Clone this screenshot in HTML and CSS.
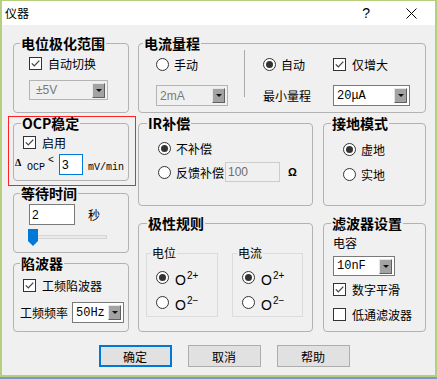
FILE: index.html
```html
<!DOCTYPE html>
<html lang="zh-CN">

<head>
    <meta charset="UTF-8">
    <meta name="viewport" content="width=device-width, initial-scale=1.0">
    <title>仪器</title>
    <link rel="stylesheet" href="styles.css">
</head>

<body>

    <div class="window">

        <div class="titlebar">
            <span class="title">仪器</span>
            <span class="help">?</span>
            <svg class="close" width="11" height="11" viewBox="0 0 11 11"><path d="M0.5 0.5 L10.5 10.5 M10.5 0.5 L0.5 10.5" stroke="#000" stroke-width="1"/></svg>
        </div>

        <div class="dialog">
            <div class="columns">

                <div class="col-left">
                    <fieldset class="group g-range">
                        <legend>电位极化范围</legend>
                        <div class="gbody">
                            <label class="opt"><span class="check"><svg width="11" height="11" viewBox="0 0 11 11"><path d="M1.8 5.4 L4.3 7.9 L9.3 2.6" stroke="#444" stroke-width="1.3" fill="none"/></svg></span><span>自动切换</span></label>
                            <div class="combo off"><span class="val">±5V</span><span class="drop"></span></div>
                        </div>
                    </fieldset>

                    <div class="mark">
                        <fieldset class="group g-ocp">
                            <legend>OCP稳定</legend>
                            <div class="gbody">
                                <label class="opt"><span class="check"><svg width="11" height="11" viewBox="0 0 11 11"><path d="M1.8 5.4 L4.3 7.9 L9.3 2.6" stroke="#444" stroke-width="1.3" fill="none"/></svg></span><span>启用</span></label>
                                <div class="ocp-row">
                                    <span class="delta">Δ</span>
                                    <span class="ocp">OCP</span>
                                    <span class="lt">&lt;</span>
                                    <span class="field focus">3</span>
                                    <span class="unit">mV/min</span>
                                </div>
                            </div>
                        </fieldset>
                    </div>

                    <fieldset class="group g-wait">
                        <legend>等待时间</legend>
                        <div class="gbody">
                            <div class="wait-row">
                                <span class="field">2</span>
                                <span class="sec">秒</span>
                            </div>
                            <div class="slider">
                                <span class="track"></span>
                                <svg class="thumb" width="10" height="17" viewBox="0 0 10 17"><path d="M0 0 H10 V12 L5 17 L0 12 Z" fill="#0078d7"/></svg>
                            </div>
                        </div>
                    </fieldset>

                    <fieldset class="group g-notch">
                        <legend>陷波器</legend>
                        <div class="gbody">
                            <label class="opt"><span class="check"><svg width="11" height="11" viewBox="0 0 11 11"><path d="M1.8 5.4 L4.3 7.9 L9.3 2.6" stroke="#444" stroke-width="1.3" fill="none"/></svg></span><span>工频陷波器</span></label>
                            <div class="freq-row">
                                <span class="freq-label">工频频率</span>
                                <div class="combo"><span class="val">50Hz</span><span class="drop"></span></div>
                            </div>
                        </div>
                    </fieldset>
                </div>

                <div class="col-right">
                    <fieldset class="group g-current">
                        <legend>电流量程</legend>
                        <div class="gbody">
                            <div class="cur-manual">
                                <label class="opt"><span class="radio"></span><span>手动</span></label>
                                <div class="combo off"><span class="val">2mA</span><span class="drop"></span></div>
                            </div>
                            <span class="vsep"></span>
                            <div class="cur-auto">
                                <label class="opt"><span class="radio on"></span><span>自动</span></label>
                                <label class="opt"><span class="check"><svg width="11" height="11" viewBox="0 0 11 11"><path d="M1.8 5.4 L4.3 7.9 L9.3 2.6" stroke="#444" stroke-width="1.3" fill="none"/></svg></span><span>仅增大</span></label>
                                <span>最小量程</span>
                                <div class="combo"><span class="val">20μA</span><span class="drop"></span></div>
                            </div>
                        </div>
                    </fieldset>

                    <fieldset class="group g-ir">
                        <legend>IR补偿</legend>
                        <div class="gbody">
                            <label class="opt"><span class="radio on"></span><span>不补偿</span></label>
                            <div class="fb-row">
                                <span class="radio"></span><span>反馈补偿</span>
                                <span class="field off">100</span>
                                <span class="ohm">Ω</span>
                            </div>
                        </div>
                    </fieldset>

                    <fieldset class="group g-ground">
                        <legend>接地模式</legend>
                        <div class="gbody">
                            <label class="opt"><span class="radio on"></span><span>虚地</span></label>
                            <label class="opt"><span class="radio"></span><span>实地</span></label>
                        </div>
                    </fieldset>

                    <fieldset class="group g-polar">
                        <legend>极性规则</legend>
                        <div class="gbody">
                            <fieldset class="sub">
                                <legend>电位</legend>
                                <div class="sbody">
                                    <label class="opt"><span class="radio on"></span><span class="ion">O<span class="sup">2+</span></span></label>
                                    <label class="opt"><span class="radio"></span><span class="ion">O<span class="sup">2−</span></span></label>
                                </div>
                            </fieldset>
                            <fieldset class="sub">
                                <legend>电流</legend>
                                <div class="sbody">
                                    <label class="opt"><span class="radio on"></span><span class="ion">O<span class="sup">2+</span></span></label>
                                    <label class="opt"><span class="radio"></span><span class="ion">O<span class="sup">2−</span></span></label>
                                </div>
                            </fieldset>
                        </div>
                    </fieldset>

                    <fieldset class="group g-filter">
                        <legend>滤波器设置</legend>
                        <div class="gbody">
                            <span class="cap-label">电容</span>
                            <div class="combo"><span class="val">10nF</span><span class="drop"></span></div>
                            <label class="opt"><span class="check"><svg width="11" height="11" viewBox="0 0 11 11"><path d="M1.8 5.4 L4.3 7.9 L9.3 2.6" stroke="#444" stroke-width="1.3" fill="none"/></svg></span><span>数字平滑</span></label>
                            <label class="opt"><span class="check"></span><span>低通滤波器</span></label>
                        </div>
                    </fieldset>
                </div>

            </div>

            <div class="actions">
                <button class="btn default">确定</button>
                <button class="btn">取消</button>
                <button class="btn">帮助</button>
            </div>
        </div>

    </div>

</body>

</html>
```

FILE: styles.css
```css
html {
    background: #7f97c1;
}

body {
    margin: 0;
    font-family: "Noto Sans CJK SC", "Liberation Sans", sans-serif;
    font-size: 12px;
    color: #000;
}

.window {
    width: 437px;
    height: 377px;
    box-sizing: border-box;
    border: 2px solid #b5cf7f;
    border-top-width: 1px;
    background: #f0f0f0;
    display: flex;
    flex-direction: column;
}

/* title bar */
.titlebar {
    height: 24px;
    flex-shrink: 0;
    background: #fff;
    display: flex;
    align-items: center;
    padding: 0 18px 0 3px;
}

.title {
    line-height: 14px;
}

.help {
    margin-left: auto;
    margin-right: 36px;
    font-family: "Liberation Sans", sans-serif;
    font-size: 14px;
}

.close {
    display: block;
}

.dialog {
    flex: 1;
    padding: 10px 0 0 11px;
}

.columns {
    display: flex;
    gap: 9px;
    align-items: flex-start;
}

.col-left {
    width: 116px;
    display: flex;
    flex-direction: column;
}

.col-right {
    display: grid;
    grid-template-columns: 175px 103px;
    column-gap: 10px;
}

/* group boxes */
.group {
    margin: 0;
    padding: 0;
    min-width: 0;
    border: 1px solid #b2b2b2;
    border-radius: 4px;
    box-sizing: border-box;
}

.group > legend {
    margin-left: 6px;
    padding: 0 1px;
    font-size: 14px;
    font-weight: bold;
    line-height: 16px;
}

.gbody {
    display: flex;
    flex-direction: column;
    align-items: flex-start;
}

.sub {
    margin: 0;
    padding: 0;
    min-width: 0;
    width: 72px;
    height: 71px;
    box-sizing: border-box;
    border: 1px solid #dcdcdc;
}

.sub > legend {
    margin-left: 4px;
    padding: 0 1px;
    line-height: 14px;
}

.sbody {
    display: flex;
    flex-direction: column;
    gap: 12px;
    padding: 11px 0 0 9px;
}

/* controls */
.opt {
    display: flex;
    align-items: center;
    height: 13px;
    line-height: 14px;
    white-space: nowrap;
}

.check {
    width: 13px;
    height: 13px;
    box-sizing: border-box;
    border: 1px solid #333;
    background: #fff;
    display: flex;
    align-items: center;
    justify-content: center;
    flex-shrink: 0;
    margin-right: 6px;
}

.check svg {
    display: block;
}

.radio {
    width: 13px;
    height: 13px;
    box-sizing: border-box;
    border: 1px solid #333;
    border-radius: 50%;
    background: #fff;
    display: flex;
    align-items: center;
    justify-content: center;
    flex-shrink: 0;
    margin-right: 5px;
}

.radio.on::after {
    content: "";
    width: 7px;
    height: 7px;
    border-radius: 50%;
    background: #333;
}

.combo {
    height: 21px;
    box-sizing: border-box;
    border: 1px solid #7a7a7a;
    background: #fff;
    display: flex;
    align-items: center;
    padding: 0 2px 0 3px;
    font-family: "Liberation Mono", monospace;
    font-size: 12px;
}

.combo .val {
    flex: 1;
}

.combo .drop {
    width: 13px;
    height: 15px;
    box-sizing: border-box;
    background: #a3a3a3;
    border: 1px solid;
    border-color: #e6e6e6 #5f5f5f #5f5f5f #e6e6e6;
    display: flex;
    align-items: center;
    justify-content: center;
}

.combo .drop::after {
    content: "";
    border-left: 3px solid transparent;
    border-right: 3px solid transparent;
    border-top: 3px solid #111;
}

.combo.off {
    background: #f0f0f0;
    border-color: #b4b4b4;
    color: #7a7a7a;
    font-family: "Liberation Sans", sans-serif;
}

.field {
    height: 21px;
    box-sizing: border-box;
    border: 1px solid #7a7a7a;
    background: #fff;
    font-family: "Liberation Sans", sans-serif;
    font-size: 12px;
    padding-left: 2px;
    display: flex;
    align-items: center;
}

.field.focus {
    border-color: #0078d7;
}

.field.off {
    border-color: #cccccc;
    background: #f0f0f0;
    color: #6d6d6d;
}

/* 电位极化范围 */
.g-range {
    height: 78px;
}

.g-range .gbody {
    padding: 6px 0 0 15px;
    gap: 10px;
}

.g-range .combo {
    width: 79px;
    height: 20px;
}

.g-range .combo .val {
    padding-left: 3px;
}

/* OCP */
.mark {
    margin: 3px -7px 0 -5px;
    padding: 0 6px 4px 4px;
    border: 1px solid #f22;
}

.g-ocp {
    height: 66px;
    margin-top: -2px;
}

.g-ocp > legend {
    margin-left: 7px;
}

.g-ocp .gbody {
    padding: 5px 0 0 9px;
}

.ocp-row {
    display: flex;
    align-items: center;
    height: 21px;
    margin: 5px 0 0 -8px;
    font-family: "Liberation Mono", monospace;
    font-size: 10px;
    line-height: 12px;
}

.delta {
    width: 12px;
    font-family: "Liberation Serif", serif;
    font-weight: bold;
    font-size: 10px;
    margin-bottom: 3px;
}

.ocp {
    width: 21px;
    margin-top: 6px;
}

.lt {
    width: 11px;
    margin-bottom: 8px;
}

.ocp-row .field {
    width: 24px;
}

.unit {
    margin: 6px 0 0 5px;
}

/* 等待时间 */
.g-wait {
    height: 68px;
    margin-top: -1px;
}

.g-wait .gbody {
    padding: 3px 0 0 15px;
}

.wait-row {
    display: flex;
    align-items: center;
}

.wait-row .field {
    width: 46px;
}

.sec {
    margin-left: 13px;
}

.slider {
    display: grid;
    width: 79px;
    margin: 4px 0 0 -1px;
}

.slider > * {
    grid-area: 1 / 1;
}

.track {
    height: 4px;
    box-sizing: border-box;
    margin-top: 6px;
    background: #e7eaea;
    border: 1px solid #d6d6d6;
}

.thumb {
    display: block;
}

/* 陷波器 */
.g-notch {
    height: 77px;
    margin-top: 2px;
}

.g-notch .gbody {
    padding: 8px 0 0 9px;
}

.freq-row {
    display: flex;
    align-items: center;
    margin: 10px 0 0 -3px;
}

.freq-label {
    width: 52px;
}

.freq-row .combo {
    width: 52px;
}

/* 电流量程 */
.g-current {
    grid-column: 1 / 3;
    height: 78px;
}

.g-current > legend {
    margin-left: 4px;
}

.g-current .gbody {
    flex-direction: row;
    padding: 7px 0 0 17px;
}

.cur-manual {
    width: 72px;
    display: flex;
    flex-direction: column;
}

.cur-manual .combo {
    margin-top: 14px;
}

.vsep {
    width: 1px;
    height: 47px;
    background: #a9a9a9;
    margin: -8px 0 0 16px;
}

.cur-auto {
    margin-left: 18px;
    display: grid;
    grid-template-columns: 70px 77px;
    grid-template-rows: 13px 21px;
    row-gap: 14px;
    align-items: center;
    white-space: nowrap;
}

/* IR补偿 / 接地模式 */
.g-ir,
.g-ground {
    height: 91px;
    margin-top: 2px;
}

.g-ir > legend {
    margin-left: 8px;
}

.g-ir .gbody {
    padding: 11px 0 0 19px;
}

.fb-row {
    display: flex;
    align-items: center;
    height: 20px;
    margin-top: 7px;
    white-space: nowrap;
}

.fb-row .field {
    width: 55px;
    height: 20px;
    margin-left: 1px;
}

.ohm {
    margin-left: 8px;
    font-family: "Liberation Sans", sans-serif;
    font-weight: bold;
    font-size: 11px;
}

.g-ground > legend {
    margin-left: 7px;
}

.g-ground .gbody {
    padding: 12px 0 0 19px;
    gap: 12px;
}

/* 极性规则 / 滤波器设置 */
.g-polar,
.g-filter {
    height: 117px;
    margin-top: 9px;
}

.g-polar > legend {
    margin-left: 8px;
}

.g-polar .gbody {
    flex-direction: row;
    gap: 14px;
    padding: 15px 0 0 7px;
}

.g-polar .sub + .sub {
    width: 71px;
}

.g-polar .radio {
    margin-right: 6px;
}

.ion {
    font-family: "Liberation Sans", sans-serif;
    font-size: 14px;
    line-height: 13px;
}

.ion .sup {
    font-size: 10px;
    vertical-align: 6px;
    margin-left: 1px;
}

.g-filter > legend {
    margin-left: 7px;
}

.g-filter .gbody {
    padding: 5px 0 0 9px;
}

.cap-label {
    line-height: 14px;
}

.g-filter .combo {
    width: 62px;
    height: 20px;
    margin-top: 6px;
}

.g-filter .opt {
    margin-top: 7px;
}

.g-filter .opt + .opt {
    margin-top: 12px;
}

/* buttons */
.actions {
    display: flex;
    justify-content: center;
    gap: 16px;
    margin-top: 13px;
}

.btn {
    width: 73px;
    height: 22px;
    box-sizing: border-box;
    padding: 0;
    border: 1px solid #adadad;
    background: #e1e1e1;
    font-family: "Noto Sans CJK SC", sans-serif;
    font-size: 12px;
    color: #000;
}

.btn.default {
    border: 2px solid #0078d7;
}
```
